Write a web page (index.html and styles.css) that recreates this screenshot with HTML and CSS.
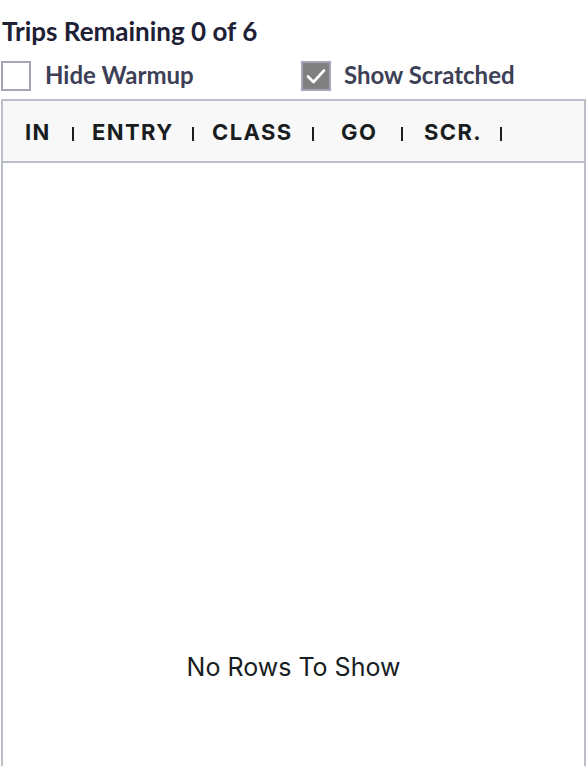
FILE: index.html
```html
<!DOCTYPE html>
<html>
<head>
<meta charset="utf-8">
<link rel="stylesheet" href="styles.css">
</head>
<body>
<div class="page">
  <h1 class="title">Trips Remaining 0 of 6</h1>
  <div class="filters">
    <label class="check">
      <span class="box"></span>
      <span class="check-label">Hide Warmup</span>
    </label>
    <label class="check check-scr">
      <span class="box box-on">
        <svg width="26" height="26" viewBox="0 0 26 26"><path d="M5 13.5 L10.5 19 L21 7.5" fill="none" stroke="#fff" stroke-width="2.6" stroke-linecap="round" stroke-linejoin="round"/></svg>
      </span>
      <span class="check-label">Show Scratched</span>
    </label>
  </div>
  <div class="grid">
    <div class="grid-head">
      <div class="hcell c-in"><span>IN</span><i class="sep"></i></div>
      <div class="hcell c-entry"><span>ENTRY</span><i class="sep"></i></div>
      <div class="hcell c-class"><span>CLASS</span><i class="sep"></i></div>
      <div class="hcell c-go"><span>GO</span><i class="sep"></i></div>
      <div class="hcell c-scr"><span>SCR.</span><i class="sep"></i></div>
    </div>
    <div class="grid-body">
      <span class="empty">No Rows To Show</span>
    </div>
  </div>
</div>
</body>
</html>
```

FILE: styles.css
```css
html, body {
  margin: 0;
  padding: 0;
  background: #fff;
}
.page {
  padding: 0 2px 0 1px;
}
.title {
  margin: 0;
  padding: 15px 0 0 1px;
  font-family: Lato, sans-serif;
  font-weight: 700;
  font-size: 26px;
  line-height: 32px;
  color: #1e2036;
}
.filters {
  display: flex;
  align-items: center;
  height: 31px;
  margin-top: 13px;
  margin-bottom: 8px;
}
.check {
  display: flex;
  align-items: center;
  gap: 14px;
  width: 300px;
  flex-shrink: 0;
}
.check-scr {
  width: auto;
  gap: 13px;
}
.box {
  box-sizing: border-box;
  width: 30px;
  height: 30px;
  border: 2px solid #a3a5b8;
  background: #fff;
  display: flex;
  align-items: center;
  justify-content: center;
  flex-shrink: 0;
}
.box-on {
  background: #808080;
}
.check-label {
  font-family: Lato, sans-serif;
  font-weight: 700;
  font-size: 24px;
  line-height: 28px;
  margin-top: -2px;
  color: #3d3f57;
}
.grid {
  box-sizing: border-box;
  border: 2px solid #babfc7;
  height: 1074px;
  display: flex;
  flex-direction: column;
}
.grid-head {
  display: flex;
  height: 60px;
  flex-shrink: 0;
  background: #f8f8f8;
  border-bottom: 2px solid #babfc7;
  font-family: Inter, sans-serif;
  font-weight: 700;
  font-size: 22px;
  letter-spacing: 1.4px;
  color: #181d1f;
}
.hcell {
  display: flex;
  align-items: center;
  box-sizing: border-box;
}
.hcell span {
  flex: 1;
  margin-top: 2px;
}
.sep {
  width: 2px;
  height: 14px;
  background: #181d1f;
  margin-top: 5px;
}
.c-in { width: 71px; padding-left: 22px; }
.c-entry { width: 120px; padding-left: 18px; }
.c-class { width: 120px; padding-left: 18px; }
.c-go { width: 89px; padding-left: 27px; }
.c-scr { width: 99px; padding-left: 21px; }
.grid-body {
  flex: 1;
  display: flex;
  align-items: center;
  justify-content: center;
  font-family: Inter, sans-serif;
  font-size: 25px;
  color: #181d1f;
}
```
